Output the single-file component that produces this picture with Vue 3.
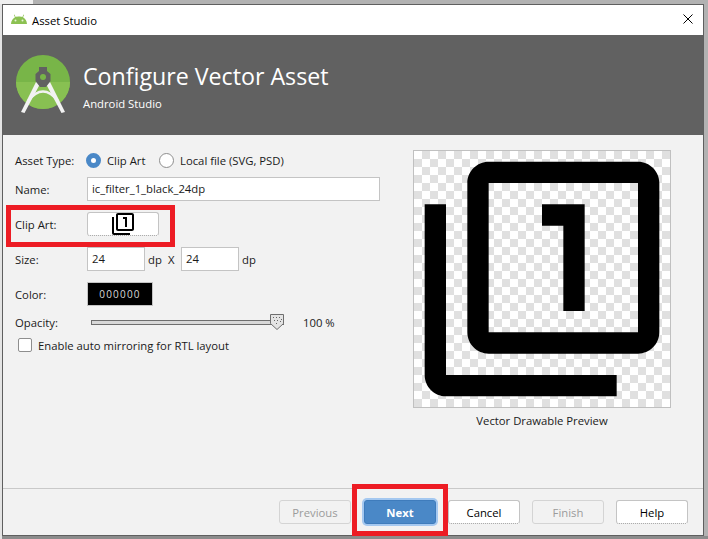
<script setup>
const assetName = 'ic_filter_1_black_24dp'
const iconPath = 'M3 5H1v16c0 1.1.9 2 2 2h16v-2H3V5zm11 10h2V5h-4v2h2v8zm7-14H7c-1.1 0-2 .9-2 2v14c0 1.1.9 2 2 2h14c1.1 0 2-.9 2-2V3c0-1.1-.9-2-2-2zm0 16H7V3h14v14z'
</script>

<template>
  <div class="screen">
    <div class="window">
      <div class="titlebar">
        <svg class="droid" viewBox="0 0 16 10" width="16" height="10">
          <path d="M0 10C.2 7 1.6 4.600 4 3.300L2.900.9l.6-.3 1.100 2.300C5.300 2.600 6.600 2.400 8 2.400s2.700.2 3.400.5L12.500.6l.6.3L12 3.300c2.400 1.300 3.800 3.700 4 6.700z" fill="#8cc152"/>
          <circle cx="4.500" cy="6.500" r="1" fill="#e6f2d8"/>
          <circle cx="11.500" cy="6.500" r="1" fill="#e6f2d8"/>
        </svg>
        <span class="title-text">Asset Studio</span>
        <svg class="close" viewBox="0 0 12 12" width="12" height="12">
          <path d="M1.500 1.500l9 9M10.500 1.500l-9 9" stroke="#000" stroke-width="1" fill="none"/>
        </svg>
      </div>

      <header class="banner">
        <svg class="logo" viewBox="0 0 54 60" width="54" height="60">
          <circle cx="27" cy="27" r="27" fill="#78b548"/>
          <path d="M0 27h54a27 27 0 0 1-54 0z" fill="#88c052"/>
          <path d="M5 57L8.500 58 24 29l-4-2zM49 57L45.500 58 30 29l4-2z" fill="#f2f2f2"/>
          <path d="M12 46Q27 27 42 46" stroke="#f2f2f2" stroke-width="2.500" fill="none"/>
          <path d="M23 12h8v4l3.500 3v7L30 32h-6l-4.500-6v-7L23 16z" fill="#616161"/>
          <circle cx="27" cy="22" r="3" fill="#78b548"/>
        </svg>
        <div class="banner-text">
          <h1>Configure Vector Asset</h1>
          <p>Android Studio</p>
        </div>
      </header>

      <main class="content">
        <form class="form" @submit.prevent>
          <div class="row row-type">
            <label class="lbl lbl-tight">Asset Type:</label>
            <span class="radio on"></span><span class="opt opt-first">Clip Art</span>
            <span class="radio"></span><span class="opt">Local file (SVG, PSD)</span>
          </div>
          <div class="row row-name">
            <label class="lbl">Name:</label>
            <span class="field wide">{{ assetName }}</span>
          </div>
          <div class="row row-clip">
            <label class="lbl">Clip Art:</label>
            <button type="button" class="clip-btn">
              <svg viewBox="0 0 24 24" width="24" height="24"><path :d="iconPath" fill="#000"/></svg>
            </button>
          </div>
          <div class="row row-size">
            <label class="lbl">Size:</label>
            <span class="field small">24</span>
            <span class="unit">dp</span>
            <span class="times">X</span>
            <span class="field small">24</span>
            <span class="unit">dp</span>
          </div>
          <div class="row row-color">
            <label class="lbl">Color:</label>
            <span class="swatch">000000</span>
          </div>
          <div class="row row-opacity">
            <label class="lbl">Opacity:</label>
            <span class="track">
              <svg class="thumb" viewBox="0 0 14 16" width="14" height="16">
                <path d="M.5.500h13v9L7 15.500.5 9.500z" fill="#e4e4e4" stroke="#6e6e6e"/>
                <path d="M3 3h1v1H3zM6 3h1v1H6zM9 3h1v1H9zM11 5h1v1h-1zM4 6h1v1H4zM7 6h1v1H7zM10 7h1v1h-1zM6 9h1v1H6z" fill="#666"/>
              </svg>
            </span>
            <span class="pct">100 %</span>
          </div>
          <div class="row row-check">
            <span class="check"></span>
            <span class="opt">Enable auto mirroring for RTL layout</span>
          </div>
        </form>

        <aside class="preview">
          <div class="checker">
            <svg viewBox="0 0 24 24" width="256" height="256"><path :d="iconPath" fill="#000"/></svg>
          </div>
          <div class="caption">Vector Drawable Preview</div>
        </aside>
      </main>

      <footer class="actions">
        <button type="button" class="btn" disabled>Previous</button>
        <button type="button" class="btn primary">Next</button>
        <button type="button" class="btn">Cancel</button>
        <button type="button" class="btn" disabled>Finish</button>
        <button type="button" class="btn">Help</button>
      </footer>
    </div>

    <div class="mark mark-clip"></div>
    <div class="mark mark-next"></div>
  </div>
</template>

<style>
html, body { margin: 0; padding: 0; background: #a8a8a8; }
</style>

<style scoped>
.screen {
  position: relative;
  width: 708px;
  height: 539px;
  overflow: hidden;
  padding: 4px 4px 3px 2px;
  box-sizing: border-box;
  background:
    linear-gradient(#efefef, #efefef) 0 0 / 33px 4px no-repeat,
    linear-gradient(#e4e4e4, #e4e4e4) 0 0 / 2px 100% no-repeat,
    linear-gradient(#8c8c8c, #8c8c8c) 0 100% / 100% 3px no-repeat,
    #b2b2b2;
  font-family: "Open Sans", "Noto Sans", sans-serif;
  font-size: 11.3px;
  color: #1a1a1a;
}
.window {
  height: 100%;
  box-sizing: border-box;
  border: 1px solid #5f5f5f;
  background: #f2f2f2;
  display: flex;
  flex-direction: column;
}
.titlebar {
  height: 30px;
  flex: none;
  background: #fff;
  display: flex;
  align-items: center;
  padding: 0 9px 0 8px;
  color: #000;
}
.droid { margin: -2px 5px 0 0; }
.close { margin-top: -2px; }
.title-text { flex: 1; }
.banner {
  height: 100px;
  flex: none;
  background: #616161;
  display: flex;
  color: #fff;
  padding: 20px 0 0 13px;
  box-sizing: border-box;
}
.logo { margin-right: 13px; }
.banner-text h1 {
  margin: 5px 0 0;
  font-size: 23.2px;
  line-height: 32px;
  font-weight: 400;
}
.banner-text p {
  margin: 3px 0 0;
  line-height: 17px;
}
.content {
  flex: 1;
  display: flex;
  border-bottom: 1px solid #c9c9c9;
  padding: 15px 0 0 12px;
  min-height: 0;
}
.form { width: 398px; flex: none; }
.row { display: flex; align-items: center; }
.lbl { width: 72px; flex: none; }
.lbl-tight { width: 71px; }
.row-type { height: 20px; margin-bottom: 7px; }
.row-name { height: 24px; margin-bottom: 11px; }
.row-clip { height: 24px; margin-bottom: 11px; }
.row-size { height: 24px; margin-bottom: 11px; }
.row-color { height: 24px; margin-bottom: 5px; }
.row-opacity { height: 23px; margin-bottom: 1px; }
.row-check { height: 20px; padding-left: 3px; }
.radio {
  width: 15px;
  height: 15px;
  box-sizing: border-box;
  border-radius: 50%;
  border: 1px solid #8e8e8e;
  background: #fff;
  flex: none;
  margin-right: 6px;
}
.radio.on { border: 5px solid #4a88c7; }
.opt-first { width: 52px; flex: none; }
.field {
  height: 24px;
  box-sizing: border-box;
  border: 1px solid #c4c4c4;
  background: #fff;
  padding: 0 4px;
  line-height: 22px;
  flex: none;
}
.field.wide { width: 293px; }
.field.small { width: 58px; }
.unit { margin-left: 3px; width: 20px; flex: none; }
.times { width: 13px; flex: none; }
.clip-btn {
  width: 72px;
  height: 24px;
  padding: 0;
  border: 1px solid #c4c4c4;
  border-bottom: 1px dotted #9a9a9a;
  border-radius: 3px;
  background: #fff;
  display: flex;
  align-items: center;
  justify-content: center;
}
.clip-btn svg { display: block; flex: none; }
.swatch {
  width: 66px;
  height: 24px;
  box-sizing: border-box;
  border: 1px solid #c4c4c4;
  background: #000;
  color: #d8d8d8;
  text-align: center;
  font-size: 10px;
  letter-spacing: 1.2px;
  line-height: 22px;
}
.track {
  position: relative;
  width: 193px;
  height: 5px;
  margin-left: 4px;
  box-sizing: border-box;
  border: 1px solid #6e6e6e;
  background: #d8d8d8;
}
.thumb { position: absolute; right: -1px; top: -7px; }
.pct { margin-left: 19px; }
.check {
  width: 14px;
  height: 14px;
  box-sizing: border-box;
  border: 1px solid #8e8e8e;
  border-radius: 2px;
  background: #fff;
  margin-right: 6px;
}
.preview { display: flex; flex-direction: column; align-items: center; width: 258px; flex: none; }
.checker {
  width: 258px;
  height: 258px;
  box-sizing: border-box;
  border: 1px solid #c0c0c0;
  background-color: #fff;
  background-image: repeating-conic-gradient(#e0e0e0 0 25%, #fff 0 50%);
  background-size: 16px 16px;
}
.checker svg { display: block; }
.caption { margin-top: 4px; line-height: 17px; }
.actions {
  height: 46px;
  flex: none;
  display: flex;
  align-items: flex-start;
  padding: 11px 0 0 276px;
  box-sizing: border-box;
}
.btn {
  width: 72px;
  height: 24px;
  margin-right: 12px;
  padding: 0;
  box-sizing: border-box;
  border: 1px solid #c4c4c4;
  border-bottom: 1px dotted #9a9a9a;
  border-radius: 3px;
  background: #fff;
  font: inherit;
  color: #000;
}
.btn:disabled { background: #f2f2f2; color: #9b9b9b; border: 1px solid #d4d4d4; }
.btn.primary {
  margin-left: 1px;
  background: #4a88c7;
  color: #fff;
  font-weight: 700;
  border: 1px solid #3f7cbc;
  box-shadow: 0 0 0 2px #a4c8f0;
}
.mark { position: absolute; border: 5px solid #ed1c24; box-sizing: border-box; }
.mark-clip { left: 6px; top: 205px; width: 169px; height: 42px; }
.mark-next { left: 352px; top: 484px; width: 96px; height: 52px; }
</style>
